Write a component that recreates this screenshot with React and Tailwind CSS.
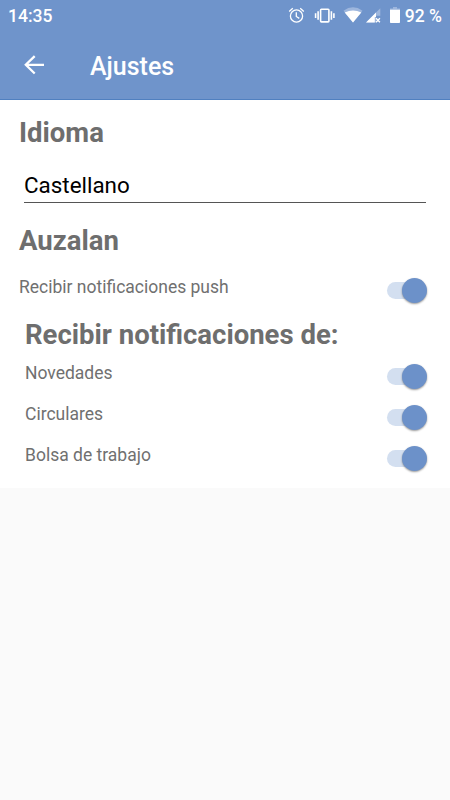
const text = "font-['Roboto',sans-serif]";

function Toggle() {
  return (
    <button type="button" role="switch" aria-checked="true" className="flex h-[26px] w-10 shrink-0 items-center rounded-full">
      <span className="flex h-[17px] w-[37px] items-center rounded-full bg-[#d3dff0]">
        <span className="ml-[15px] h-[25px] w-[25px] shrink-0 rounded-full bg-[#6c91c9] shadow-[0_1px_2px_rgba(0,0,0,0.4)]" />
      </span>
    </button>
  );
}

function Row({ label, className }) {
  return (
    <div className={`flex justify-between pr-[23px] ${className}`}>
      <span className="text-[17.5px] leading-[22px] text-[#707070]">{label}</span>
      <div className="pt-px">
        <Toggle />
      </div>
    </div>
  );
}

function StatusIcons() {
  return (
    <svg width="118" height="24" viewBox="286 4 118 24" fill="none" aria-hidden="true">
      <g stroke="#fff" strokeWidth="1.3">
        <circle cx="296.5" cy="16" r="6.1" />
        <path d="M296.3 12.3v4.2l3 1.9M289.2 11.5l3.6-3.2M303.8 11.5l-3.6-3.2" />
      </g>
      <g stroke="#fff" strokeWidth="1.6">
        <rect x="320.6" y="9.3" width="8.3" height="12.6" rx="0.8" />
        <path d="M318.1 11.3v8.4M331.4 11.3v8.4M315.6 13.3v4.7M333.9 13.3v4.7" />
      </g>
      <path d="M343.5 10.7Q353 4 362.5 10.7L353 22.5Z" fill="#9db6dd" />
      <path d="M344.7 12.4Q353 8.5 361.3 12.4L353 22.5Z" fill="#fff" />
      <path d="M380.3 8.3v7.5H376v6.7h-10Z" fill="#9db6dd" />
      <path d="M376 12.5v4.6h-1.2v5.4H366Z" fill="#fff" />
      <path d="m376 18.2 3.9 4M379.9 18.2l-3.9 4" stroke="#fff" strokeWidth="1.4" />
      <path d="M393 7h4v1.6h3V12h-10V8.6h3Z" fill="#9db6dd" />
      <path d="M390 9.8h10v12.4q0 .8-.8.8h-8.4q-.8 0-.8-.8Z" fill="#fff" />
    </svg>
  );
}

export default function App() {
  return (
    <div className={`flex h-[800px] w-[450px] flex-col overflow-hidden bg-[#fafafa] ${text}`}>
      <header className="h-[100px] shrink-0 border-b border-[#5080c0] bg-[#6f94cb] text-white">
        <div className="flex h-8 items-center justify-between px-2 text-[17.5px] font-medium">
          <span>14:35</span>
          <div className="flex items-center gap-px">
            <StatusIcons />
            <span className="whitespace-nowrap">92 %</span>
          </div>
        </div>
        <div className="flex h-[66px] items-center pl-6">
          <svg width="21" height="20" viewBox="0 0 21 20" fill="none" stroke="#fff" strokeWidth="2.3" aria-hidden="true">
            <path d="M20 9.8H1.6M10.7 1.1 1.8 9.8l8.9 8.7" />
          </svg>
          <h1 className="ml-[45px] pt-1 text-[25px] font-medium leading-8">Ajustes</h1>
        </div>
      </header>
      <main className="h-[388px] shrink-0 bg-white">
        <section className="pl-[19px] pt-[17px]">
          <h2 className="text-[27.5px] font-bold leading-8 text-[#6e6e6e]">Idioma</h2>
          <div className="ml-[5px] mr-6 mt-[19px] h-[35px] border-b border-[#555]">
            <div className="text-[22.4px] leading-[34px] text-black">Castellano</div>
          </div>
        </section>
        <section className="pl-[19px] pt-[22px]">
          <h2 className="text-[27.5px] font-bold leading-8 text-[#6e6e6e]">Auzalan</h2>
          <Row label="Recibir notificaciones push" className="mt-[19px] h-[43px]" />
        </section>
        <section className="pl-[25px]">
          <h2 className="text-[27.5px] font-bold leading-8 text-[#6e6e6e]">Recibir notificaciones de:</h2>
          <Row label="Novedades" className="mt-[11px] h-[41px]" />
          <Row label="Circulares" className="h-[41px]" />
          <Row label="Bolsa de trabajo" className="h-[41px]" />
        </section>
      </main>
    </div>
  );
}
